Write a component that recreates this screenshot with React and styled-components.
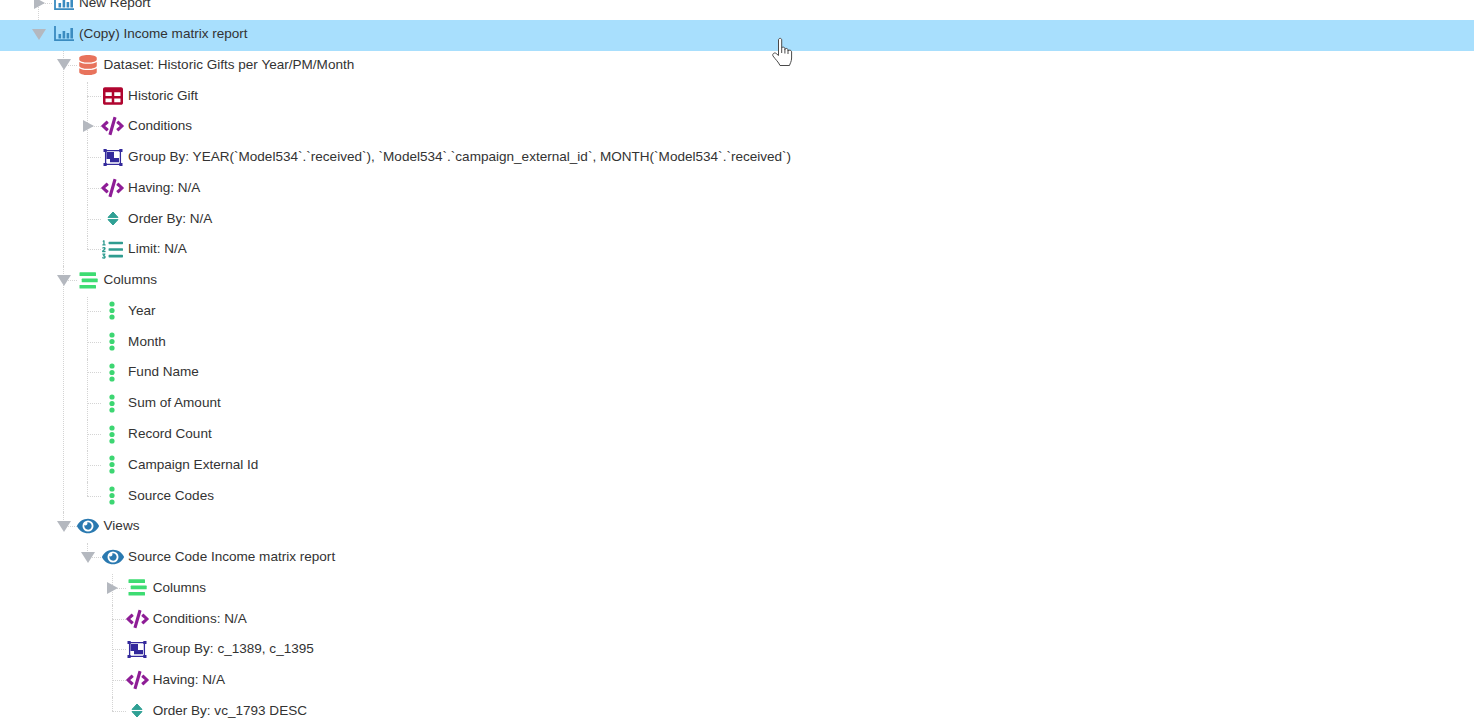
import React from 'react'
import styled, { createGlobalStyle, css } from 'styled-components'
import { FaDatabase, FaTable, FaCode, FaListOl, FaEye } from 'react-icons/fa'

const ROW = 30.77
const INDENT = 24.55

const GlobalStyle = createGlobalStyle`
  html, body {
    margin: 0;
    background: #fff;
    overflow: hidden;
  }
  body {
    font-family: "Liberation Sans", Arial, sans-serif;
    font-size: 13.55px;
    color: #333;
  }
`

const Page = styled.div`
  position: relative;
  height: 720px;
  overflow: hidden;
`

const Branch = styled.ul`
  list-style: none;
  margin: 0;
  padding: 0;
  ${(props) =>
    props.$root &&
    css`
      margin-top: -10.6px;
    `}
`

const Item = styled.li`
  position: relative;

  /* guide lines */
  &::before {
    content: '';
    position: absolute;
    z-index: 0;
    top: 0;
    left: ${(p) => 38 + p.$level * INDENT}px;
    height: ${(p) => (p.$last ? `${ROW / 2 - 1.5}px` : '100%')};
    border-left: 1px dotted #d4d4d4;
  }
  &::after {
    content: '';
    position: absolute;
    z-index: 0;
    top: ${ROW / 2 - 1.5}px;
    left: ${(p) => 38 + p.$level * INDENT}px;
    width: 14px;
    border-top: 1px dotted #d4d4d4;
  }
`

const Row = styled.div`
  position: relative;
  z-index: 1;
  box-sizing: border-box;
  display: flex;
  align-items: center;
  height: ${ROW}px;
  padding-bottom: 3px;
  padding-left: ${(p) => 32 + p.$level * INDENT}px;
  background: ${(p) => (p.$selected ? '#a8dffd' : 'transparent')};
`

const Toggle = styled.span`
  flex: none;
  width: 14px;
  height: 11px;
  margin-right: 6px;
  display: flex;
  align-items: center;
  justify-content: center;
  ${(p) =>
    p.$state === 'open' &&
    css`
      &::before {
        content: '';
        border-left: 7px solid transparent;
        border-right: 7px solid transparent;
        border-top: 11px solid #b4b8bf;
      }
    `}
  ${(p) =>
    p.$state === 'closed' &&
    css`
      &::before {
        content: '';
        border-top: 6.5px solid transparent;
        border-bottom: 6.5px solid transparent;
        border-left: 11px solid #b4b8bf;
      }
    `}
`

const IconBox = styled.span`
  flex: none;
  width: 23px;
  height: 22px;
  margin-right: 4px;
  display: flex;
  align-items: center;
  justify-content: center;
  color: ${(p) => p.$color};
  font-size: ${(p) => p.$size || 18}px;
`

const Label = styled.span`
  white-space: nowrap;
  line-height: 20px;
`

const Cursor = styled.svg`
  position: absolute;
  z-index: 5;
  top: 37px;
  left: 772px;
`

const Dots = styled.svg`
  margin-right: 2px;
`

const ChartIcon = () => (
  <svg width="20" height="16" viewBox="0 0 20 16" fill="none">
    <path d="M1 0v14.2h19" stroke="#3a8bc0" strokeWidth="1.8" />
    <path d="M4.5 8h2.6v4.5H4.5zM8.6 5h2.6v7.5H8.6zM12.6 7h2.6v5.5h-2.6zM16.4 2h2.6v10.5h-2.6z" fill="#3a8bc0" />
  </svg>
)

const BarsIcon = () => (
  <svg width="19" height="17" viewBox="0 0 19 17">
    <rect x="0.5" y="0.3" width="16.5" height="3.7" rx="0.6" fill="#3ddc72" />
    <rect x="2.7" y="6.6" width="16" height="3.7" rx="0.6" fill="#3ddc72" />
    <rect x="0.5" y="12.9" width="16.5" height="3.7" rx="0.6" fill="#3ddc72" />
  </svg>
)

const DotsIcon = () => (
  <Dots width="6" height="19" viewBox="0 0 6 19" fill="#3dd672">
    <circle cx="3" cy="3" r="2.6" />
    <circle cx="3" cy="9.5" r="2.6" />
    <circle cx="3" cy="16" r="2.6" />
  </Dots>
)

const SortIcon = () => (
  <svg width="12" height="15" viewBox="0 0 12 15" fill="#2fa094" stroke="#2fa094" strokeWidth="1" strokeLinejoin="round">
    <path d="M6 1 11 6.4H1z" />
    <path d="M6 14 11 8.6H1z" />
  </svg>
)

const GroupIcon = () => (
  <svg width="20" height="17" viewBox="0 0 20 17">
    <path d="M2.6 1.6h14.8v13.800H2.600z" fill="#fff" stroke="#33299c" strokeWidth="1.300" />
    <path d="M0.500 0h3.200v3H0.500zM16.300 0h3.200v3h-3.200zM0.500 14h3.200v3H0.500zM16.300 14h3.200v3h-3.200z" fill="#33299c" />
    <path d="M3.500 3h7.500v6h5v4.300H7V10H3.500z" fill="#33299c" />
  </svg>
)

const icons = {
  chart: { el: <ChartIcon /> },
  db: { el: <FaDatabase />, color: '#e8735c', size: 20 },
  table: { el: <FaTable />, color: '#b0052f', size: 20 },
  code: { el: <FaCode />, color: '#8e1d96', size: 24 },
  group: { el: <GroupIcon /> },
  sort: { el: <SortIcon /> },
  list: { el: <FaListOl />, color: '#2f9c90', size: 21 },
  bars: { el: <BarsIcon /> },
  dots: { el: <DotsIcon /> },
  eye: { el: <FaEye />, color: '#2a79b0', size: 22 },
}

const n = (icon, label, state, children) => ({ icon, label, state, children })

const datasetRows = [
  n('table', 'Historic Gift'),
  n('code', 'Conditions', 'closed'),
  n('group', 'Group By: YEAR(`Model534`.`received`), `Model534`.`campaign_external_id`, MONTH(`Model534`.`received`)'),
  n('code', 'Having: N/A'),
  n('sort', 'Order By: N/A'),
  n('list', 'Limit: N/A'),
]

const columnRows = ['Year', 'Month', 'Fund Name', 'Sum of Amount', 'Record Count', 'Campaign External Id', 'Source Codes'].map(
  (name) => n('dots', name)
)

const tree = [
  n('chart', 'New Report', 'closed'),
  {
    ...n('chart', '(Copy) Income matrix report', 'open', [
      n('db', 'Dataset: Historic Gifts per Year/PM/Month', 'open', datasetRows),
      n('bars', 'Columns', 'open', columnRows),
      n('eye', 'Views', 'open', [
        n('eye', 'Source Code Income matrix report', 'open', [
          n('bars', 'Columns', 'closed'),
          n('code', 'Conditions: N/A'),
          n('group', 'Group By: c_1389, c_1395'),
          n('code', 'Having: N/A'),
          n('sort', 'Order By: vc_1793 DESC'),
        ]),
      ]),
    ]),
    selected: true,
  },
]

function TreeNode({ node, level, last }) {
  const icon = icons[node.icon]
  return (
    <Item $level={level} $last={last}>
      <Row $level={level} $selected={node.selected}>
        <Toggle $state={node.state} />
        <IconBox $color={icon.color} $size={icon.size}>
          {icon.el}
        </IconBox>
        <Label>{node.label}</Label>
      </Row>
      {node.children && (
        <Branch>
          {node.children.map((child, index) => (
            <TreeNode key={index} node={child} level={level + 1} last={index === node.children.length - 1} />
          ))}
        </Branch>
      )}
    </Item>
  )
}

export default function App() {
  return (
    <Page>
      <GlobalStyle />
      <Branch $root>
        {tree.map((node, index) => (
          <TreeNode key={index} node={node} level={0} last={index === tree.length - 1} />
        ))}
      </Branch>
      <Cursor width="21" height="30" viewBox="0 0 21 30">
        <path
          d="M6.5 17V3C6.5.8 9.7.8 9.7 3v8c0-1.2 3.2-1.2 3.2.5v1c.1-1.5 3.1-1.5 3.1.5v1c.2-1.4 3.600-1.200 3.600 1v6c0 3.500-1.600 5.500-2.100 7.500H8C6.500 25 3.500 22.500 1 19c-1.200-2 1.500-4 3.200-2.500l2.300 2z"
          fill="#fff"
          stroke="#4a4a4a"
          strokeWidth="1"
          strokeLinejoin="round"
        />
        <path d="M9.700 11v5M12.900 12v4.500M16 13.500v3.500" stroke="#4a4a4a" strokeWidth="1" fill="none" />
      </Cursor>
    </Page>
  )
}
